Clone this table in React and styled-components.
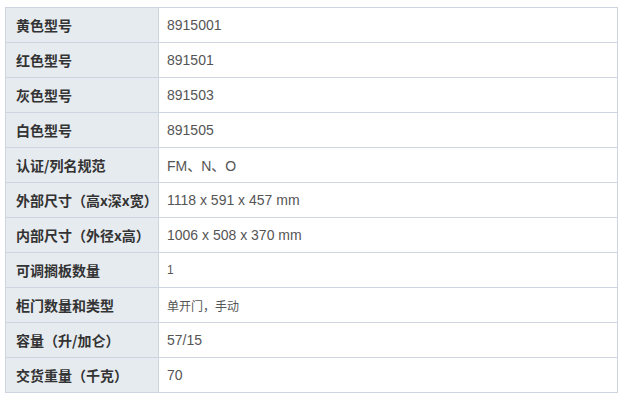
import React from "react";
import styled, { createGlobalStyle } from "styled-components";

const GlobalStyle = createGlobalStyle`
  body {
    margin: 0;
    background: #fff;
    font-family: "Liberation Sans", Arial, "Noto Sans CJK SC", sans-serif;
  }
`;

const specs = [
  { label: "黄色型号", value: "8915001" },
  { label: "红色型号", value: "891501" },
  { label: "灰色型号", value: "891503" },
  { label: "白色型号", value: "891505" },
  { label: "认证/列名规范", value: "FM、N、O" },
  { label: "外部尺寸（高x深x宽）", value: "1118 x 591 x 457 mm" },
  { label: "内部尺寸（外径x高）", value: "1006 x 508 x 370 mm" },
  { label: "可调搁板数量", value: "1", small: true },
  { label: "柜门数量和类型", value: "单开门，手动", small: true },
  { label: "容量（升/加仑）", value: "57/15" },
  { label: "交货重量（千克）", value: "70" },
];

const Spec = () => {
  return (
    <Wrapper>
      <Table>
        <tbody>
          {specs.map((row) => (
            <Row key={row.label}>
              <Label>{row.label}</Label>
              <Value $small={row.small}>{row.value}</Value>
            </Row>
          ))}
        </tbody>
      </Table>
    </Wrapper>
  );
};

const Wrapper = styled.div`
  padding: 7px 0 0 5px;
`;

const Table = styled.table`
  width: 613px;
  border-collapse: collapse;
  table-layout: fixed;
`;

const Row = styled.tr`
  height: 35px;
`;

const Label = styled.td`
  width: 142px;
  padding: 0 0 0 10px;
  border: 1px solid #cdd6e0;
  background-color: #e6ebf0;
  color: #333;
  font-family: "Noto Sans CJK SC", sans-serif;
  font-size: 14px;
  font-weight: bold;
  white-space: nowrap;
  vertical-align: middle;
`;

const Value = styled.td`
  padding: 0 0 0 8px;
  border: 1px solid #cdd6e0;
  background-color: #fff;
  color: #555;
  font-family: "Liberation Sans", Arial, "Noto Sans CJK SC", sans-serif;
  font-size: ${(p) => (p.$small ? "12px" : "14px")};
  vertical-align: middle;
`;

const App = () => (
  <>
    <GlobalStyle />
    <Spec />
  </>
);

export default App;
